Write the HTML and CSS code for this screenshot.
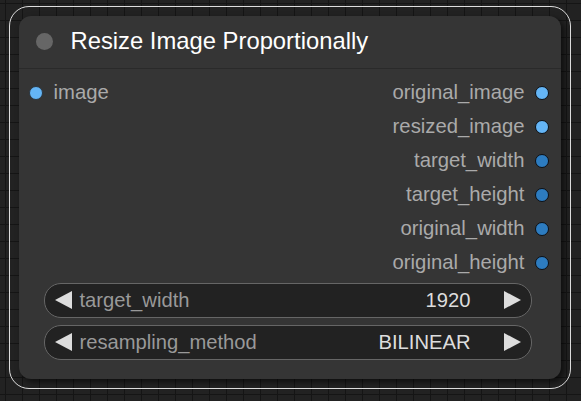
FILE: index.html
```html
<!DOCTYPE html>
<html>
<head>
<meta charset="utf-8">
<link rel="stylesheet" href="styles.css">
</head>
<body>
<div class="selection">
  <div class="node">
    <div class="title">
      <span class="title-dot"></span>
      <span class="title-text">Resize Image Proportionally</span>
    </div>
    <div class="slots">
      <div class="inputs">
        <div class="slot in"><span class="dot light"></span><span>image</span></div>
      </div>
      <div class="outputs">
        <div class="slot out"><span>original_image</span><span class="dot light"></span></div>
        <div class="slot out"><span>resized_image</span><span class="dot light"></span></div>
        <div class="slot out"><span>target_width</span><span class="dot dark"></span></div>
        <div class="slot out"><span>target_height</span><span class="dot dark"></span></div>
        <div class="slot out"><span>original_width</span><span class="dot dark"></span></div>
        <div class="slot out"><span>original_height</span><span class="dot dark"></span></div>
      </div>
    </div>
    <div class="widgets">
      <div class="widget">
        <span class="arrow left"></span>
        <span class="wlabel">target_width</span>
        <span class="wvalue">1920</span>
        <span class="arrow right"></span>
      </div>
      <div class="widget">
        <span class="arrow left"></span>
        <span class="wlabel">resampling_method</span>
        <span class="wvalue">BILINEAR</span>
        <span class="arrow right"></span>
      </div>
    </div>
  </div>
</div>
</body>
</html>
```

FILE: styles.css
```css
html, body {
  margin: 0;
  height: 100%;
}
body {
  background-color: #222222;
  background-image:
    linear-gradient(to right, #151515 1px, transparent 1px),
    linear-gradient(to bottom, #151515 1px, transparent 1px);
  background-size: 17px 17px;
  background-position: 5px 3px;
  padding: 6px 10px 0 9px;
  box-sizing: border-box;
  font-family: "Liberation Sans", Arial, sans-serif;
}
.selection {
  width: 562px;
  height: 383px;
  box-sizing: border-box;
  border: 1.5px solid #dddddd;
  border-radius: 20px;
  padding: 8.5px;
}
.node {
  width: 542px;
  height: 363px;
  background: #353535;
  border-radius: 12px;
  box-shadow: 3px 3px 6px rgba(0, 0, 0, 0.6);
  display: flex;
  flex-direction: column;
}
.title {
  height: 52px;
  border-bottom: 1px solid #2a2a2a;
  display: flex;
  align-items: center;
  padding-left: 17px;
  gap: 18px;
  flex-shrink: 0;
}
.title-dot {
  width: 17px;
  height: 17px;
  border-radius: 50%;
  background: #666666;
}
.title-text {
  color: #ffffff;
  font-size: 23.8px;
  line-height: 1;
  margin-top: -1px;
}
.slots {
  display: flex;
  justify-content: space-between;
  padding: 7px 12px 0 10px;
}
.slot {
  height: 34px;
  display: flex;
  align-items: center;
  color: #aaaaaa;
  font-size: 20.3px;
}
.slot.in {
  gap: 11px;
}
.slot.out {
  justify-content: flex-end;
  gap: 10px;
}
.dot {
  width: 12px;
  height: 12px;
  border-radius: 50%;
  border: 1.5px solid #0c0f14;
  flex-shrink: 0;
}
.dot.light {
  background: #64b5f6;
}
.dot.dark {
  background: #2d7cc0;
}
.in .dot {
  border-color: #2b3640;
}
.widgets {
  display: flex;
  flex-direction: column;
  gap: 7px;
  padding: 3px 29px 0 25px;
}
.widget {
  height: 35px;
  box-sizing: border-box;
  border: 1.5px solid #666666;
  border-radius: 17px;
  background: #222222;
  display: flex;
  align-items: center;
  padding: 0 10px 0 10px;
  font-size: 20.2px;
}
.arrow {
  width: 0;
  height: 0;
  border-top: 9px solid transparent;
  border-bottom: 9px solid transparent;
}
.arrow.left {
  border-right: 17px solid #dddddd;
  margin-right: 8px;
}
.arrow.right {
  border-left: 17px solid #dddddd;
  margin-left: 33px;
}
.wlabel {
  color: #999999;
  flex: 1;
}
.wvalue {
  color: #dddddd;
}
```
